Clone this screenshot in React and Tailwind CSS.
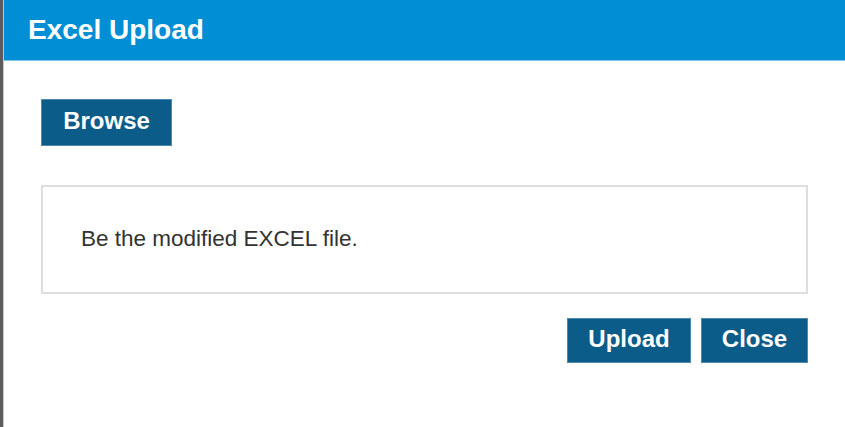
import React from "react";

function ActionButton({ children, className = "" }) {
  return (
    <button
      className={
        "h-[45px] pb-[3px] bg-[#0b5c88] border border-[#4f88ac] text-white font-bold text-[24px] leading-none " +
        className
      }
    >
      {children}
    </button>
  );
}

export default function App() {
  return (
    <div
      className="w-[845px] h-[427px] flex bg-white overflow-hidden"
      style={{ fontFamily: '"Liberation Sans", Arial, sans-serif' }}
    >
      <div className="w-[3px] bg-[#5c5c5c]" />
      <div className="w-px bg-[#c8c8c8]" />
      <div className="flex-1 flex flex-col">
        <div className="h-[61px] bg-[#008ed5] border-b border-[#7fc4e9] flex items-center pl-[24px]">
          <h1 className="text-white font-bold text-[28px] leading-none">
            Excel Upload
          </h1>
        </div>
        <div className="pl-[37px] pr-[37px] pt-[38px]">
          <ActionButton className="w-[131px] h-[47px]">Browse</ActionButton>
          <div className="mt-[39px] h-[109px] border-2 border-[#dedede] flex items-center pl-[38px]">
            <p className="text-[#333333] text-[22.5px] leading-none">
              Be the modified EXCEL file.
            </p>
          </div>
          <div className="mt-[24px] flex justify-end gap-[10px]">
            <ActionButton className="w-[124px]">Upload</ActionButton>
            <ActionButton className="w-[107px]">Close</ActionButton>
          </div>
        </div>
      </div>
    </div>
  );
}
